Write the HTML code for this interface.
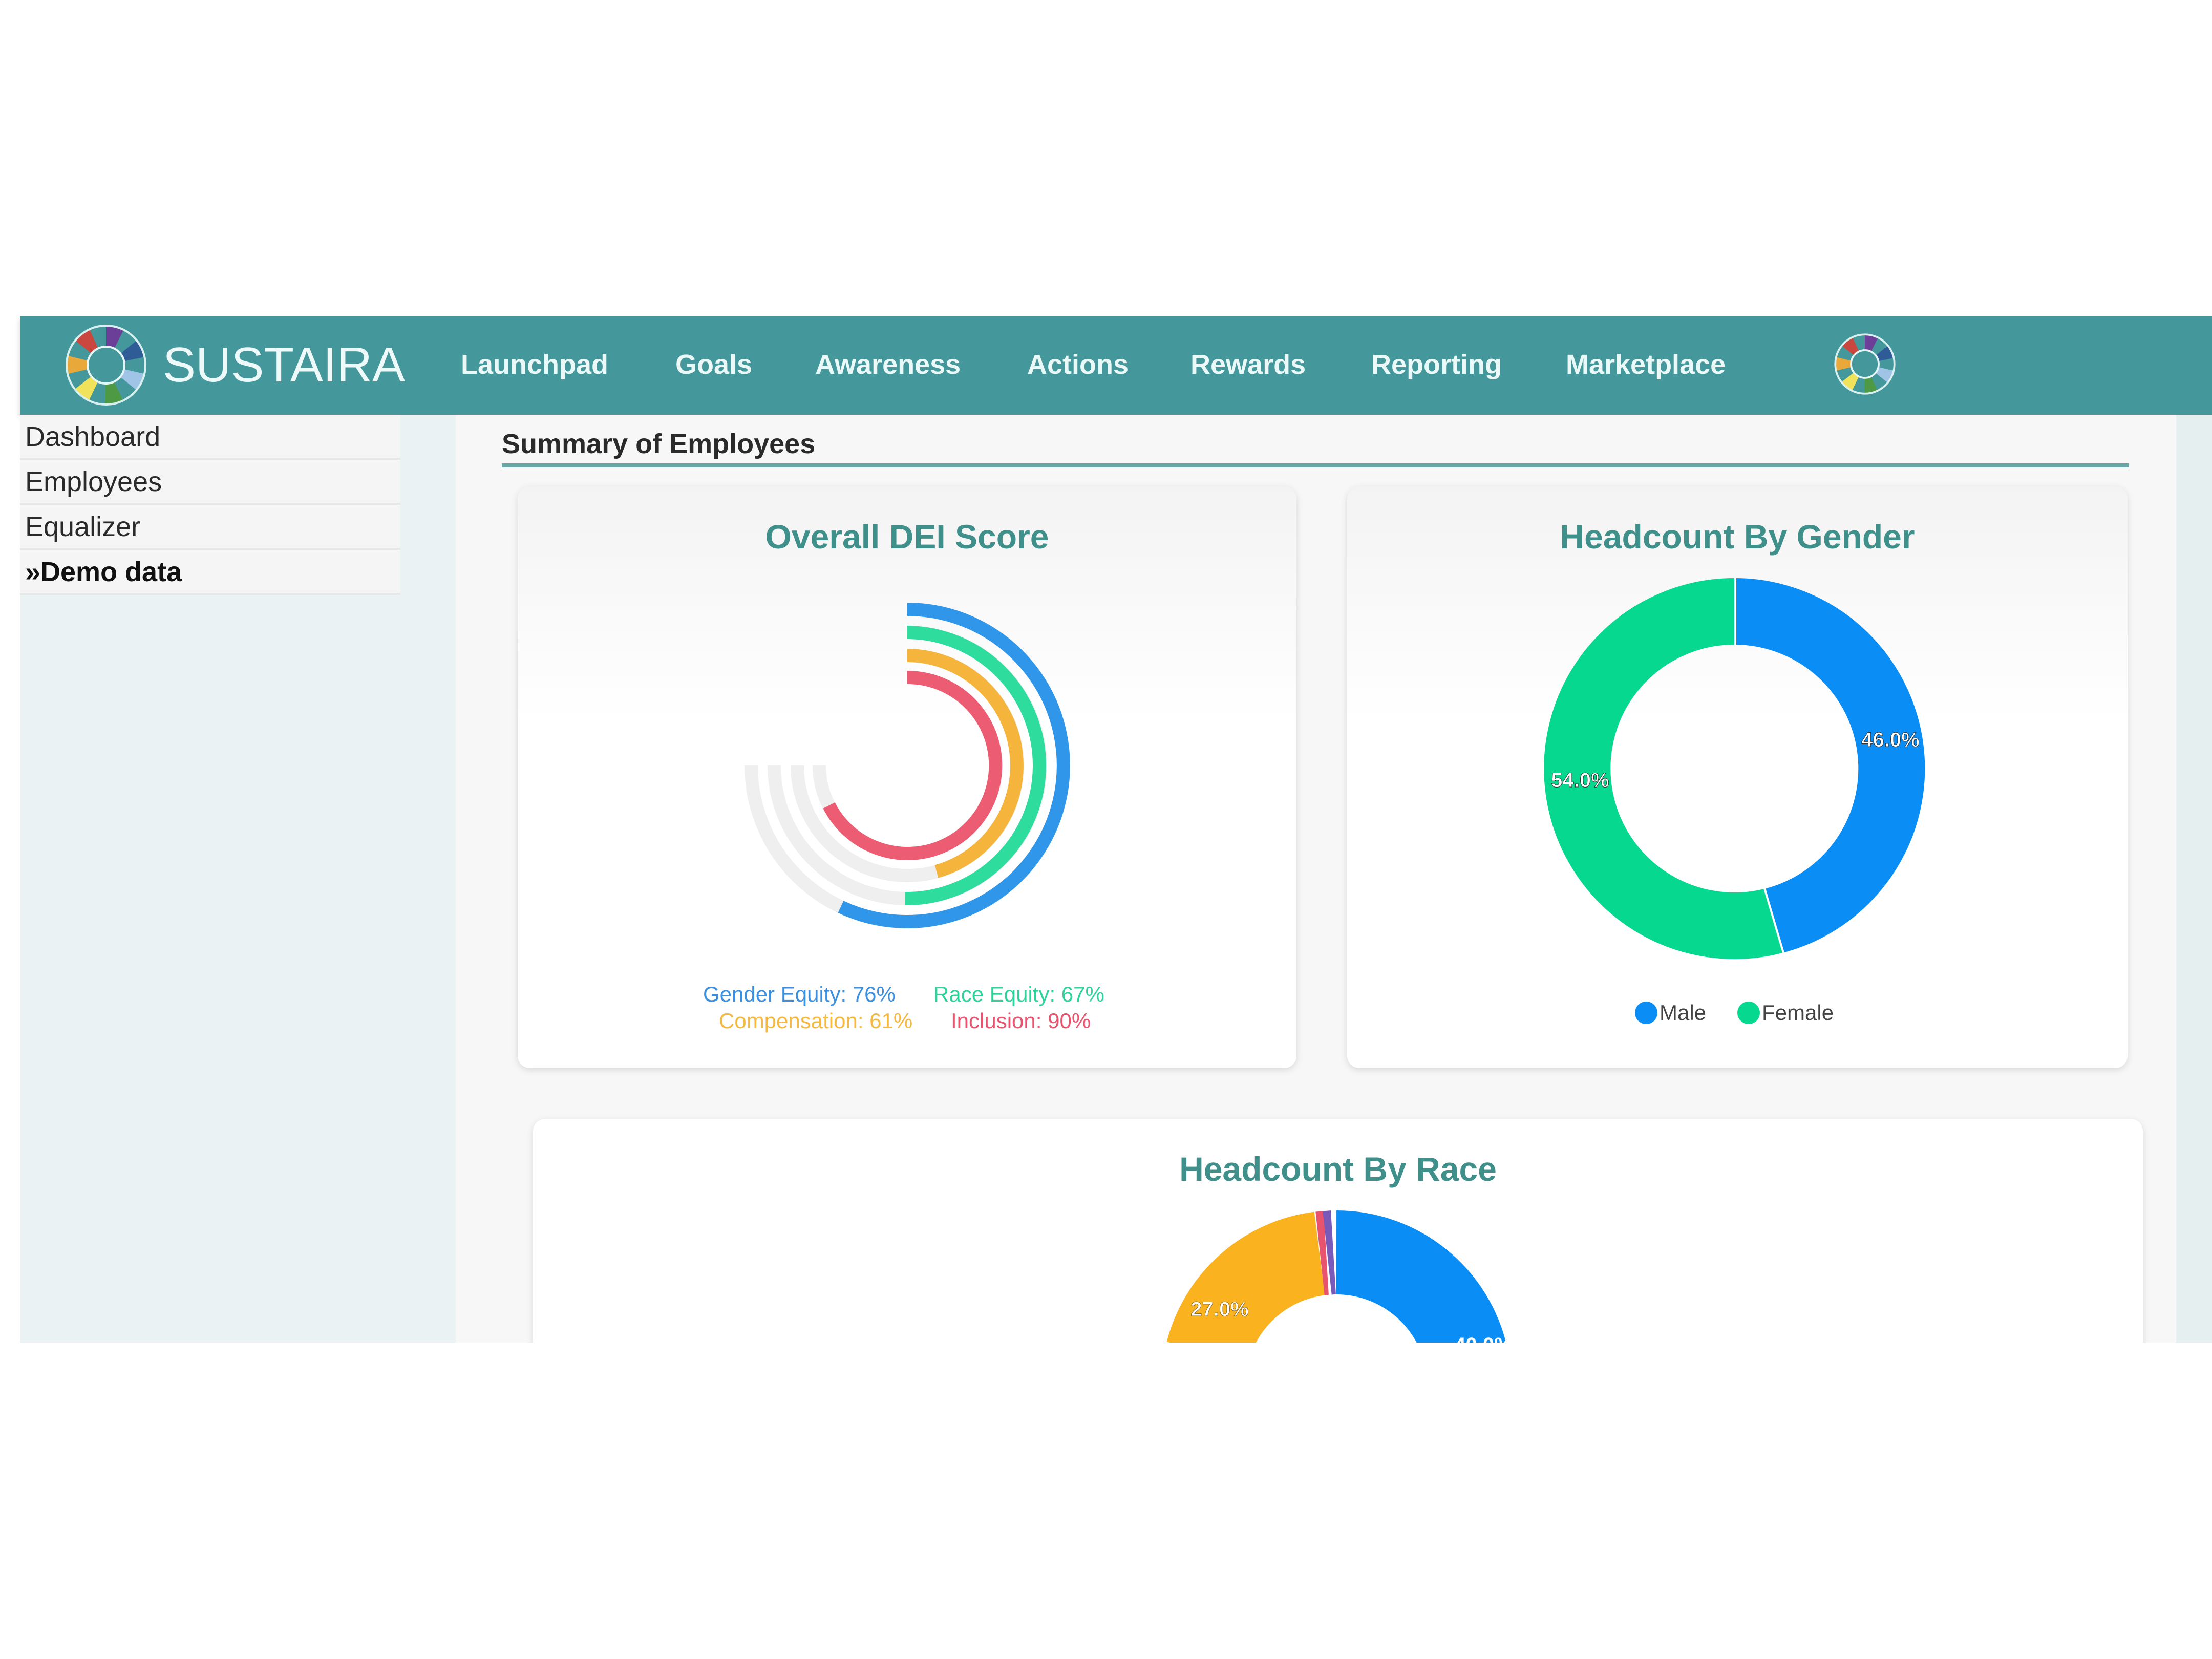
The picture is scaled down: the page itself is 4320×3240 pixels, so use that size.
<!DOCTYPE html>
<html><head><meta charset="utf-8"><style>
*{margin:0;padding:0;box-sizing:border-box}
body{width:4320px;height:3240px;background:#fff;position:relative;overflow:hidden;font-family:"Liberation Sans",sans-serif}
.abs{position:absolute}
.nav{left:39px;top:617px;width:4281px;height:193px;background:#44979a;box-shadow:0 6px 10px rgba(0,0,0,.15)}
.ni{position:absolute;top:680px;color:#eaf8f8;font-weight:bold;font-size:54px;line-height:64px}
.side{left:39px;top:810px;width:851px;height:1814px;background:#eaf2f4}
.si{position:absolute;left:39px;width:743px;height:88px;background:#f5f5f5;border-bottom:4px solid #e6e8e8;font-size:54px;color:#2a2a2a;padding-left:10px;line-height:86px}
.content{left:890px;top:810px;width:3360px;height:1814px;background:#f7f7f7}
.rstrip{left:4250px;top:810px;width:70px;height:1814px;background:#e6eff0}
.card{position:absolute;border-radius:24px;background:linear-gradient(#f3f3f3,#fff 40%);box-shadow:0 4px 14px rgba(0,0,0,.12)}
.ct{position:absolute;width:100%;text-align:center;color:#3f8f8a;font-weight:bold;font-size:66px}
.lg{position:absolute;font-size:42px;white-space:nowrap}
</style></head><body>
<div class="abs nav"></div>
<svg class="abs" style="left:127px;top:633px" width="160" height="160" viewBox="-80 -80 160 160">
<g fill="none" stroke-width="40">
<circle r="56" stroke="#6b3f97" stroke-dasharray="51 400" stroke-dashoffset="25" transform="rotate(-90)"/>
<circle r="56" stroke="#2f5b97" stroke-dasharray="51 400" stroke-dashoffset="25" transform="rotate(-38.6)"/>
<circle r="56" stroke="#9fc4e6" stroke-dasharray="51 400" stroke-dashoffset="25" transform="rotate(12.8)"/>
<circle r="56" stroke="#4e9a44" stroke-dasharray="51 400" stroke-dashoffset="25" transform="rotate(64.3)"/>
<circle r="56" stroke="#f0e25a" stroke-dasharray="51 400" stroke-dashoffset="25" transform="rotate(115.7)"/>
<circle r="56" stroke="#e9a83a" stroke-dasharray="51 400" stroke-dashoffset="25" transform="rotate(167.1)"/>
<circle r="56" stroke="#c9473e" stroke-dasharray="51 400" stroke-dashoffset="25" transform="rotate(218.6)"/>
</g>
<circle r="77" fill="none" stroke="#d8f0f0" stroke-width="4"/>
<circle r="36" fill="#44979a" stroke="#e4f6f6" stroke-width="4"/>
</svg>
<div class="abs" style="left:318px;top:658px;font-size:96px;color:#eef9f9;line-height:110px">SUSTAIRA</div>
<div class="ni" style="left:900px">Launchpad</div>
<div class="ni" style="left:1319px">Goals</div>
<div class="ni" style="left:1592px">Awareness</div>
<div class="ni" style="left:2006px">Actions</div>
<div class="ni" style="left:2325px">Rewards</div>
<div class="ni" style="left:2678px">Reporting</div>
<div class="ni" style="left:3058px">Marketplace</div>
<svg class="abs" style="left:3582px;top:651px" width="120" height="120" viewBox="-80 -80 160 160">
<g fill="none" stroke-width="40">
<circle r="56" stroke="#6b3f97" stroke-dasharray="51 400" stroke-dashoffset="25" transform="rotate(-90)"/>
<circle r="56" stroke="#2f5b97" stroke-dasharray="51 400" stroke-dashoffset="25" transform="rotate(-38.6)"/>
<circle r="56" stroke="#9fc4e6" stroke-dasharray="51 400" stroke-dashoffset="25" transform="rotate(12.8)"/>
<circle r="56" stroke="#4e9a44" stroke-dasharray="51 400" stroke-dashoffset="25" transform="rotate(64.3)"/>
<circle r="56" stroke="#f0e25a" stroke-dasharray="51 400" stroke-dashoffset="25" transform="rotate(115.7)"/>
<circle r="56" stroke="#e9a83a" stroke-dasharray="51 400" stroke-dashoffset="25" transform="rotate(167.1)"/>
<circle r="56" stroke="#c9473e" stroke-dasharray="51 400" stroke-dashoffset="25" transform="rotate(218.6)"/>
</g>
<circle r="77" fill="none" stroke="#d8f0f0" stroke-width="5"/>
<circle r="36" fill="#44979a" stroke="#e4f6f6" stroke-width="5"/>
</svg>

<div class="abs side"></div>
<div class="si" style="top:810px">Dashboard</div>
<div class="si" style="top:898px">Employees</div>
<div class="si" style="top:986px">Equalizer</div>
<div class="si" style="top:1074px;font-weight:bold;color:#111">»Demo data</div>
<div class="abs content"></div>
<div class="abs rstrip"></div>

<div class="abs" style="left:980px;top:836px;font-size:54px;font-weight:bold;color:#2a2a2a">Summary of Employees</div>
<div class="abs" style="left:980px;top:905px;width:3178px;height:8px;background:#6aa5a6"></div>

<div class="card" style="left:1011px;top:950px;width:1521px;height:1136px">
<div class="ct" style="top:60px">Overall DEI Score</div>
<div class="lg" style="left:362px;top:968px;color:#3b8fe0">Gender Equity: 76%</div>
<div class="lg" style="left:812px;top:968px;color:#2dd49a">Race Equity: 67%</div>
<div class="lg" style="left:393px;top:1020px;color:#f5b942">Compensation: 61%</div>
<div class="lg" style="left:846px;top:1020px;color:#e8546e">Inclusion: 90%</div>
</div>
<div class="card" style="left:2631px;top:950px;width:1524px;height:1136px">
<div class="ct" style="top:60px">Headcount By Gender</div>
<div class="lg" style="left:562px;top:1004px;color:#444"><span style="display:inline-block;width:44px;height:44px;border-radius:50%;background:#0a8ef5;vertical-align:-8px;margin-right:4px"></span>Male</div>
<div class="lg" style="left:762px;top:1004px;color:#444"><span style="display:inline-block;width:44px;height:44px;border-radius:50%;background:#06d98f;vertical-align:-8px;margin-right:4px"></span>Female</div>
</div>
<div class="card" style="left:1041px;top:2185px;width:3144px;height:600px;background:#fff">
<div class="ct" style="top:60px">Headcount By Race</div>
</div>

<svg class="abs" style="left:0;top:0" width="4320" height="2622">
<g fill="none" stroke="#efefef" stroke-width="26">
<path d="M1772 1190 A305 305 0 1 1 1467 1495"/>
<path d="M1772 1235 A260 260 0 1 1 1512 1495"/>
<path d="M1772 1280 A215 215 0 1 1 1557 1495"/>
<path d="M1772 1323 A172 172 0 1 1 1600 1495"/>
</g>
<g fill="none" stroke-width="26">
<path d="M1772 1190 A305 305 0 1 1 1642 1771" stroke="#3096ea"/>
<path d="M1772 1235 A260 260 0 1 1 1768 1755" stroke="#2edc9e"/>
<path d="M1772 1280 A215 215 0 0 1 1829 1702" stroke="#f5b53c"/>
<path d="M1772 1323 A172 172 0 1 1 1619 1573" stroke="#ec5c72"/>
</g>
<g fill="none" stroke-width="130">
<path d="M3389 1194 A307 307 0 0 1 3465 1798" stroke="#0a8ef5"/>
<path d="M3465 1798 A307 307 0 1 1 3389 1194" stroke="#06d98f"/>
</g>
<line x1="3389" y1="1129" x2="3389" y2="1259" stroke="#fff" stroke-width="4"/>
<line x1="3446" y1="1735" x2="3483" y2="1861" stroke="#fff" stroke-width="4"/>
<text x="3692" y="1458" fill="#fff" font-family="Liberation Sans" font-weight="bold" font-size="40" text-anchor="middle" stroke="#333" stroke-width="1">46.0%</text>
<text x="3086" y="1537" fill="#fff" font-family="Liberation Sans" font-weight="bold" font-size="40" text-anchor="middle" stroke="#333" stroke-width="1">54.0%</text>
<g transform="translate(7,0)">
<g fill="none" stroke-width="164">
<path d="M2603 2446 A260 260 0 0 1 2714 2941" stroke="#0a8ef5"/>
<path d="M2351 2641 A260 260 0 0 1 2570 2448" stroke="#fbb21f"/>
<path d="M2571 2448 A260 260 0 0 1 2583 2447" stroke="#e8546e"/>
<path d="M2585 2447 A260 260 0 0 1 2597 2446" stroke="#7a5ab8"/>
</g>
<text x="2375" y="2570" fill="#fff" font-family="Liberation Sans" font-weight="bold" font-size="40" text-anchor="middle" stroke="#8a6a20" stroke-width="1">27.0%</text>
<text x="2890" y="2640" fill="#fff" font-family="Liberation Sans" font-weight="bold" font-size="40" text-anchor="middle">40.0%</text>
</g>
</svg>
<div class="abs" style="left:0;top:2622px;width:4320px;height:618px;background:#fff"></div>
</body></html>
